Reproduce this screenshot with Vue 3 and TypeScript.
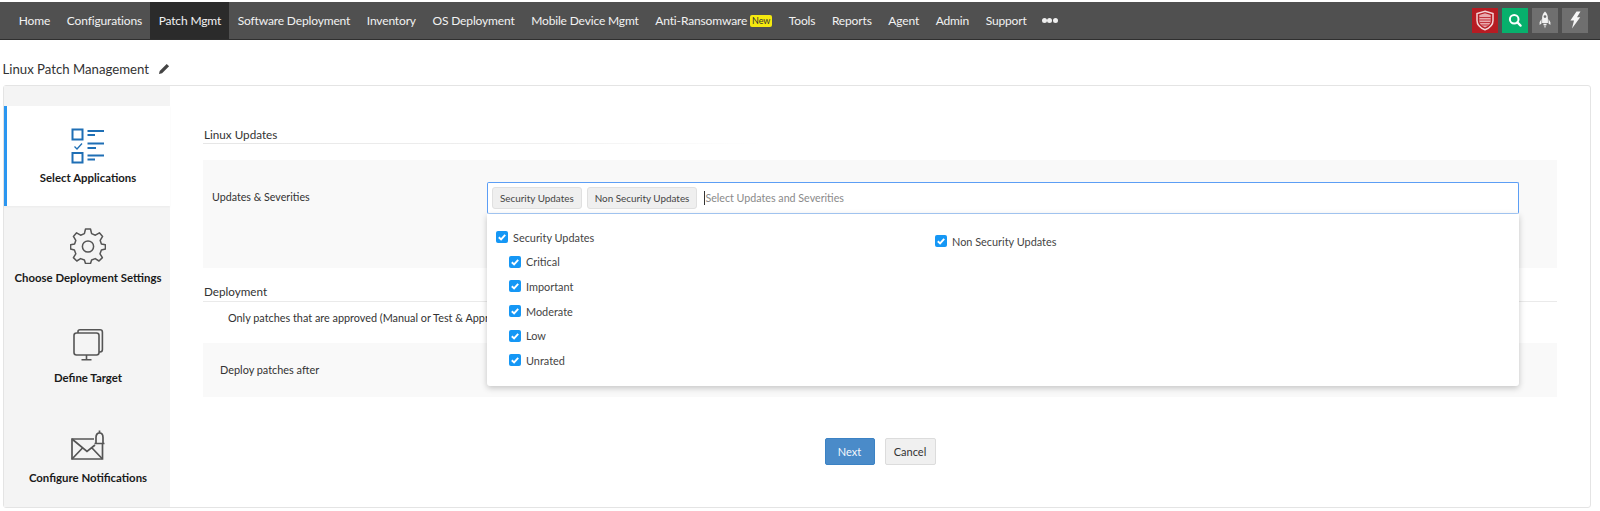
<script setup lang="ts">
const navItems: { label: string; active?: boolean; badge?: string }[] = [
  { label: 'Home' },
  { label: 'Configurations' },
  { label: 'Patch Mgmt', active: true },
  { label: 'Software Deployment' },
  { label: 'Inventory' },
  { label: 'OS Deployment' },
  { label: 'Mobile Device Mgmt' },
  { label: 'Anti-Ransomware', badge: 'New' },
  { label: 'Tools' },
  { label: 'Reports' },
  { label: 'Agent' },
  { label: 'Admin' },
  { label: 'Support' },
]
const severities: string[] = ['Critical', 'Important', 'Moderate', 'Low', 'Unrated']
</script>

<template>
  <div class="page">
    <header class="topbar">
      <nav class="nav">
        <a v-for="item in navItems" :key="item.label" class="nav-item" :class="{ active: item.active }">
          {{ item.label }}<span v-if="item.badge" class="badge">{{ item.badge }}</span>
        </a>
        <span class="dots"><i></i><i></i><i></i></span>
      </nav>
      <div class="tools">
        <span class="tool red">
          <svg width="20" height="21" viewBox="0 0 20 21" fill="none">
            <path d="M10 1.2 L18 3.6 V10.5 C18 15 14.5 18 10 19.8 C5.5 18 2 15 2 10.5 V3.6 Z" stroke="#f3d5d8" stroke-width="1.5" />
            <path d="M4.3 5 L10 3.3 L15.7 5 V10.5 C15.7 13.8 13.2 16 10 17.4 C6.8 16 4.3 13.8 4.3 10.5 Z" fill="#e9a9ae" />
            <path d="M4.3 7.5 H15.7 M4.3 10 H15.7 M4.8 12.5 H15.2 M6.2 15 H13.8" stroke="#c1333c" stroke-width="1" />
          </svg>
        </span>
        <span class="tool green">
          <svg width="14" height="14" viewBox="0 0 14 14" fill="none">
            <circle cx="6.2" cy="6.2" r="4.3" stroke="#fff" stroke-width="2" />
            <path d="M9.4 9.4 L12.6 12.6" stroke="#fff" stroke-width="2.2" stroke-linecap="round" />
          </svg>
        </span>
        <span class="tool grey">
          <svg width="14" height="18" viewBox="0 0 14 18" fill="#f2f2f2" fill-rule="evenodd">
            <path d="M7 0.5 C9.2 2.4 9.9 5 9.9 7.5 V12 H4.1 V7.5 C4.1 5 4.8 2.4 7 0.5 Z M7 4.2 A1.4 1.4 0 1 0 7 7 A1.4 1.4 0 1 0 7 4.2 Z" />
            <path d="M3.5 8 L1.6 11.2 V14 L3.5 12.6 Z M10.5 8 L12.4 11.2 V14 L10.5 12.6 Z" />
            <path d="M5.2 12.8 H8.8 L8.2 14.4 H5.8 Z M6.3 15 H7.7 L7 17.6 Z" />
          </svg>
        </span>
        <span class="tool grey">
          <svg width="12" height="18" viewBox="0 0 12 18" fill="#f5f5f5">
            <path d="M7.5 0.5 L11.5 0.5 L8 6.2 L11.2 6.2 L3 17.5 L5 9.6 L1.4 9.6 Z" />
          </svg>
        </span>
      </div>
    </header>

    <div class="title-row">
      <span class="title">Linux Patch Management</span>
      <svg class="pencil" width="12" height="12" viewBox="0 0 13 13" fill="#444">
        <path d="M9.4 1 L12 3.6 L4.4 11.2 L1 12 L1.8 8.6 Z" />
      </svg>
    </div>

    <section class="card">
      <aside class="sidebar">
        <div class="step current">
          <svg class="step-icon" width="36" height="36" viewBox="0 0 36 36" fill="none" stroke="#1f6fb5">
            <rect x="2.5" y="1.5" width="10" height="10" stroke-width="2" />
            <rect x="2.5" y="25" width="10" height="9.5" stroke-width="2" />
            <path d="M4.5 18.5 L7 21 L12 15.5" stroke-width="1.3" />
            <path d="M17.5 3 H34 M17.5 7 H25 M17.5 15.5 H34 M17.5 20 H26 M17.5 27.5 H34 M17.5 31.5 H25" stroke-width="2" />
          </svg>
          <span class="step-label">Select Applications</span>
        </div>
        <div class="step">
          <svg class="step-icon" width="36" height="36" viewBox="0 0 36 36" fill="none" stroke="#555" stroke-width="1.5" stroke-linejoin="round">
            <path d="M15.5 1 H20.5 L21.6 5.6 L25.4 7.2 L29.4 4.8 L32.6 8.4 L30.2 12.4 L31.4 16 L35.4 16.8 V21 L31.4 22 L30 25.8 L32.4 29.6 L29 33 L25.2 30.6 L21.6 32 L20.5 35.4 H15.5 L14.4 32 L10.6 30.6 L6.8 33 L3.4 29.6 L5.8 25.8 L4.4 22 L0.6 21 V16.8 L4.6 16 L5.8 12.4 L3.4 8.4 L6.6 4.8 L10.6 7.2 L14.4 5.6 Z" />
            <circle cx="18" cy="18.5" r="5.6" />
          </svg>
          <span class="step-label">Choose Deployment Settings</span>
        </div>
        <div class="step">
          <svg class="step-icon" width="36" height="36" viewBox="0 0 36 36" fill="none" stroke="#555" stroke-width="1.6">
            <rect x="4" y="5" width="25" height="22" rx="2.5" />
            <path d="M8 5 V3.6 C8 2.5 8.8 1.8 10 1.8 H30 C31.4 1.8 32.4 2.7 32.4 4 V21.5 C32.4 23 31.4 24 30 24 H29" />
            <path d="M16.5 27 V31.5 M11.5 31.8 H21.5" />
          </svg>
          <span class="step-label">Define Target</span>
        </div>
        <div class="step">
          <svg class="step-icon" width="36" height="36" viewBox="0 0 36 36" fill="none" stroke="#555" stroke-width="1.7">
            <path d="M24 11 H2 V31 H32.5 V16" />
            <path d="M2 11 L17 23.5 L25 17 M2 31 L12.5 20 M32.5 31 L22 20" />
            <path d="M26 15.5 V9.5 C26 6.5 27.5 5 29.5 5 C31.5 5 33 6.5 33 9.5 V15.5 H34.5 H24.5 Z" fill="#f4f4f4" />
            <path d="M29.5 2.5 V5" />
          </svg>
          <span class="step-label">Configure Notifications</span>
        </div>
      </aside>

      <main class="main">
        <h3 class="section-head fade">Linux Updates</h3>
        <div class="row updates-row">
          <label class="row-label">Updates &amp; Severities</label>
          <div class="select-wrap">
            <div class="select">
              <span class="chip">Security Updates</span>
              <span class="chip">Non Security Updates</span>
              <span class="caret"></span>
              <span class="placeholder">Select Updates and Severities</span>
            </div>
            <div class="dropdown">
              <div class="col">
                <label class="check parent"><span class="box"><svg width="10" height="10" viewBox="0 0 10 10"><path d="M1.8 5.2 L4.1 7.4 L8.2 2.8" fill="none" stroke="#fff" stroke-width="1.9" /></svg></span>Security Updates</label>
                <label v-for="s in severities" :key="s" class="check child"><span class="box"><svg width="10" height="10" viewBox="0 0 10 10"><path d="M1.8 5.2 L4.1 7.4 L8.2 2.8" fill="none" stroke="#fff" stroke-width="1.9" /></svg></span>{{ s }}</label>
              </div>
              <div class="col right">
                <label class="check parent"><span class="box"><svg width="10" height="10" viewBox="0 0 10 10"><path d="M1.8 5.2 L4.1 7.4 L8.2 2.8" fill="none" stroke="#fff" stroke-width="1.9" /></svg></span>Non Security Updates</label>
              </div>
            </div>
          </div>
        </div>

        <h3 class="section-head second">Deployment</h3>
        <p class="note">Only patches that are approved (Manual or Test &amp; Appr</p>
        <div class="row deploy-row">
          <span class="deploy-label">Deploy patches after</span>
        </div>

        <div class="actions">
          <button class="btn primary" type="button">Next</button>
          <button class="btn" type="button">Cancel</button>
        </div>
      </main>
    </section>
  </div>
</template>

<style scoped>
.page {
  width: 1600px;
  height: 511px;
  overflow: hidden;
  padding-top: 2px;
  box-sizing: border-box;
  background: #fff;
  font-family: Lato, "Open Sans", sans-serif;
  color: #333;
}
.topbar {
  height: 38px;
  box-sizing: border-box;
  background: #505050;
  border-bottom: 1px solid #2f2f2f;
  display: flex;
  justify-content: space-between;
  align-items: stretch;
}
.nav {
  display: flex;
  align-items: stretch;
  padding-left: 10.5px;
}
.nav-item {
  display: flex;
  align-items: center;
  padding: 0 8.3px;
  font-size: 12px;
  letter-spacing: -0.15px;
  color: #f2f2f2;
  white-space: nowrap;
}
.nav-item.active {
  background: #2b2b2b;
}
.badge {
  margin-left: 3px;
  background: #f5e90f;
  color: #333;
  font-size: 9px;
  line-height: 12px;
  height: 12px;
  padding: 0 2px;
  border-radius: 2px;
}
.dots {
  display: flex;
  align-items: center;
  gap: 0.5px;
  margin-left: 7px;
}
.dots i {
  width: 5px;
  height: 5px;
  border-radius: 50%;
  background: #eee;
}
.tools {
  display: flex;
  align-items: center;
  gap: 4px;
  padding: 0 12px 1px 0;
}
.tool {
  width: 26px;
  height: 25px;
  display: flex;
  align-items: center;
  justify-content: center;
}
.tool.red { background: #b71c23; }
.tool.green { background: #07b06c; }
.tool.grey { background: #6f6f6f; }

.title-row {
  height: 45px;
  display: flex;
  align-items: center;
  padding-left: 2.5px;
  padding-top: 13px;
  box-sizing: border-box;
  gap: 9px;
}
.title {
  font-size: 13.2px;
  color: #333;
}
.card {
  margin-left: 3px;
  width: 1588px;
  height: 423px;
  box-sizing: border-box;
  border: 1px solid #e4e4e4;
  border-radius: 3px;
  display: flex;
}
.sidebar {
  width: 166px;
  flex: none;
  background: #f4f4f4;
  padding-top: 20px;
  box-sizing: border-box;
}
.step {
  height: 100px;
  box-sizing: border-box;
  padding: 22px 0 0 2px;
  display: flex;
  flex-direction: column;
  align-items: center;
}
.step.current {
  background: #fff;
  border-left: 3px solid #2b96f0;
  padding-right: 3px;
  box-shadow: 0 1px 2px rgba(0, 0, 0, 0.04);
}
.step-icon {
  display: block;
}
.step-label {
  margin-top: 6px;
  font-size: 11.4px;
  line-height: 16px;
  font-weight: 700;
  color: #1a1a1a;
  white-space: nowrap;
}
.main {
  flex: 1;
  padding: 40px 33px 0 33px;
  box-sizing: border-box;
  min-width: 0;
}
.section-head {
  margin: 0;
  padding-left: 1px;
  font-size: 11.7px;
  font-weight: 400;
  line-height: 17px;
  color: #333;
  border-bottom: 1px solid #eaeaea;
  height: 18px;
  box-sizing: content-box;
}
.section-head.fade {
  border-bottom: none;
  position: relative;
  width: 560px;
  background: linear-gradient(to right, #e6e6e6, #f0f0f0 60%, #fff) bottom / 100% 1px no-repeat;
}
.section-head.second {
  margin-top: 15px;
}
.row {
  background: #f9f9f9;
}
.updates-row {
  margin-top: 16px;
  height: 108px;
  box-sizing: border-box;
  padding: 22px 38px 0 9px;
  display: flex;
}
.row-label {
  width: 275px;
  flex: none;
  font-size: 10.7px;
  line-height: 30px;
  color: #333;
}
.select-wrap {
  flex: 1;
  position: relative;
  min-width: 0;
}
.select {
  height: 32px;
  box-sizing: border-box;
  background: #fff;
  border: 1px solid #5c9ef5;
  border-bottom-color: #a8cdfb;
  border-radius: 2px;
  display: flex;
  align-items: center;
  padding-left: 4px;
  gap: 5px;
}
.chip {
  height: 22px;
  line-height: 20px;
  box-sizing: border-box;
  padding: 0 7px;
  font-size: 9.9px;
  color: #444;
  background: #efefef;
  border: 1px solid #e0e0e0;
  border-radius: 3px;
  white-space: nowrap;
}
.caret {
  width: 1px;
  height: 14px;
  background: #333;
  margin-left: 2px;
}
.placeholder {
  margin-left: -5px;
  padding-bottom: 2px;
  font-size: 10.7px;
  color: #8a8a8a;
}
.dropdown {
  position: absolute;
  z-index: 5;
  left: 0;
  right: 0;
  top: 32px;
  height: 172px;
  background: #fff;
  border-radius: 0 0 3px 3px;
  box-shadow: 0 2px 6px rgba(0, 0, 0, 0.22);
  display: flex;
}
.col {
  width: 439px;
  padding-left: 9px;
  box-sizing: border-box;
}
.col.right {
  padding-top: 4px;
}
.check {
  display: flex;
  align-items: center;
  font-size: 10.9px;
  color: #444;
  height: 24.6px;
}
.col > .parent:first-child {
  margin-top: 11px;
}
.child {
  padding-left: 13px;
}
.box {
  width: 12px;
  height: 12px;
  margin-right: 5px;
  flex: none;
  background: #1597f5;
  border-radius: 2px;
  display: flex;
  align-items: center;
  justify-content: center;
}
.note {
  margin: 0;
  padding: 8px 0 0 25px;
  height: 41px;
  box-sizing: border-box;
  font-size: 10.85px;
  line-height: 16px;
  color: #333;
  white-space: nowrap;
}
.deploy-row {
  height: 54px;
  box-sizing: border-box;
  padding: 0 0 2px 17px;
  display: flex;
  align-items: center;
}
.deploy-label {
  font-size: 10.9px;
  color: #333;
}
.actions {
  margin-top: 41px;
  display: flex;
  justify-content: center;
  gap: 10px;
}
.btn {
  width: 51px;
  height: 27px;
  box-sizing: border-box;
  font-family: inherit;
  font-size: 11px;
  color: #333;
  background: #f0f0f0;
  border: 1px solid #dcdcdc;
  border-radius: 2px;
  padding: 0;
}
.btn.primary {
  width: 50px;
  background: #4a8bc9;
  border-color: #3b82c4;
  color: #f4f8fc;
}
</style>
